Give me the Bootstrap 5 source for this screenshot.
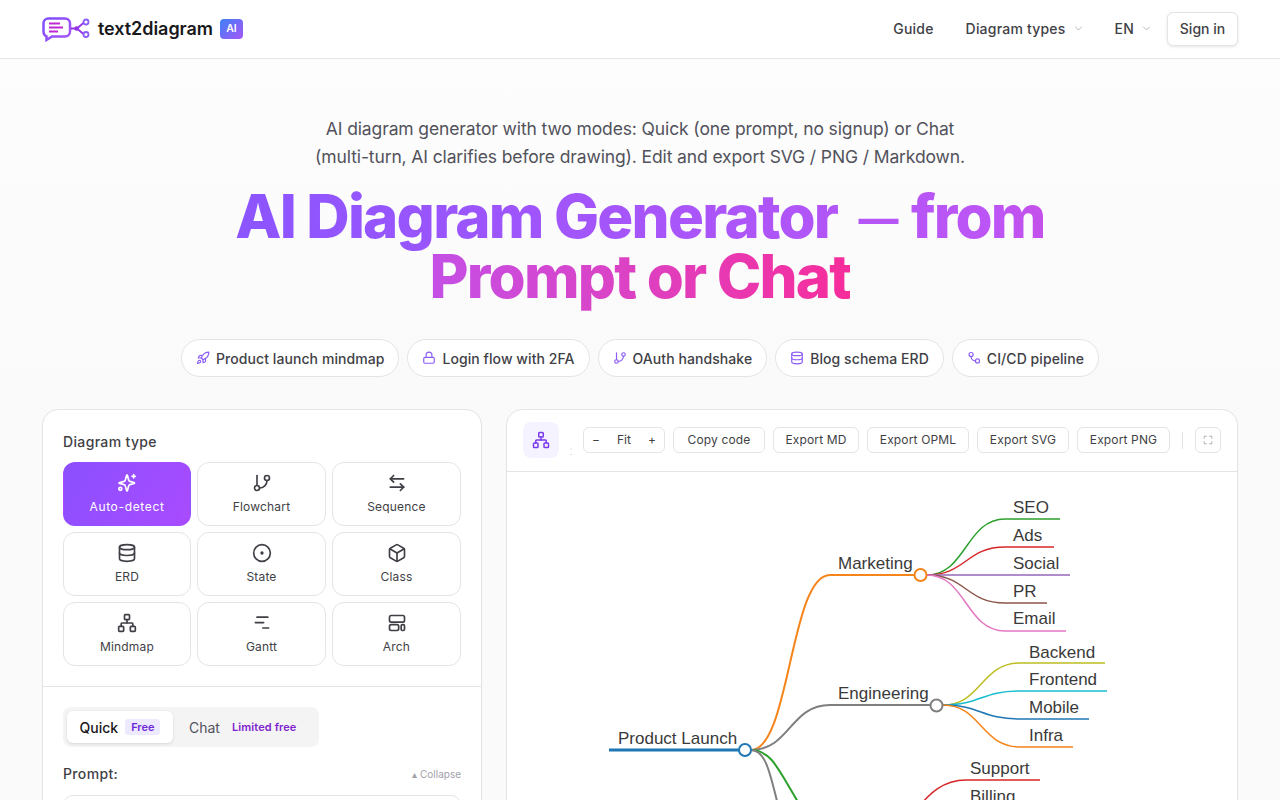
<!DOCTYPE html>
<html lang="en">
<head>
<meta charset="utf-8">
<title>text2diagram</title>
<link rel="stylesheet" href="https://cdn.jsdelivr.net/npm/bootstrap@5.3.0/dist/css/bootstrap.min.css">
<style>
body{font-family:Inter,"Liberation Sans",sans-serif;background:#fafafa;color:#27272a;font-size:14px}
svg{display:block;flex:none}
.ico{fill:none;stroke:currentColor;stroke-width:2;stroke-linecap:round;stroke-linejoin:round}
.topbar{height:59px;background:#fff;border-bottom:1px solid #e4e4e7;padding:0 42px}
.logo-name{font-size:18px;font-weight:600;color:#18181b;letter-spacing:-.003em;padding-bottom:2px}
.ai-tag{width:23px;height:20px;margin-left:7px;border-radius:4px;background:linear-gradient(135deg,#3b82f6,#a855f7);color:#fff;font-size:10.5px;font-weight:600}
.nav-item-link{color:#3f3f46;font-size:14px;font-weight:450;letter-spacing:.015em;text-decoration:none;padding-bottom:2px}
.nav-gap{margin-left:32px}
.chev{color:#a1a1aa}
.signin{height:34px;width:71px;padding:0 0 2px;margin-left:16px;font-size:14px;font-weight:450;color:#3f3f46;background:#fff;border:1px solid #e4e4e7;border-radius:6px;box-shadow:0 1px 3px rgba(0,0,0,.1)}
.hero{background:linear-gradient(#fdfdfe,#fafafa);padding:56px 42px 0}
.hero-sub{width:700px;font-size:17.5px;letter-spacing:-.12px;line-height:28px;color:#52525b;margin:0 auto 15px}
.hero-title{font-size:60px;line-height:60px;font-weight:800;letter-spacing:-.03em;margin:0 auto;width:900px}
.grad-one,.grad-two{display:block;width:fit-content;margin:0 auto;padding-bottom:14px;-webkit-background-clip:text;background-clip:text;color:transparent}
.grad-one{margin-bottom:-14px;background-image:linear-gradient(90deg,#8c55ff 0%,#bd55f5 94%,#c450ea 100%)}
.grad-two{margin-bottom:-14px;background-image:linear-gradient(90deg,#c44fe6 0%,#d944c8 41%,#f72d9b 100%)}
.dash{font-size:40px;line-height:0;vertical-align:5px;margin:0 3px 0 10px}
.chip-row{margin-top:33px;gap:8px}
.chip{height:38px;padding:0 14px;border:1px solid #e4e4e7;border-radius:19px;background:#fff;font-size:14px;font-weight:450;color:#3f3f46;gap:6px;letter-spacing:.005em}
.chip svg{color:#8b5cf6}
.studio{display:grid;grid-template-columns:440px 732px;gap:24px;padding:32px 42px 40px}
.panel{background:#fff;border:1px solid #e4e4e7;border-radius:16px;overflow:hidden;box-shadow:0 1px 2px rgba(0,0,0,.03)}
.panel-sec{padding:20px 20px 20px}
.field-label{font-size:14px;font-weight:450;color:#3f3f46;letter-spacing:.025em;line-height:24px;margin-bottom:8px}
.type-grid{display:grid;grid-template-columns:128px 129px 129px;gap:6px}
.type-cell{height:64px;border:1px solid #e4e4e7;border-radius:12px;background:#fff;color:#3f3f46;font-size:12px;letter-spacing:.015em;padding:10px 0 0;gap:5px}
.type-cell.on{background:linear-gradient(120deg,#8b50ff,#a94bff);border-color:transparent;color:#fff;letter-spacing:.055em}
.divider-top{border-top:1px solid #e4e4e7}
.seg{width:256px;height:40px;background:#f4f4f5;border-radius:8px;padding:4px}
.seg-on{width:106px;height:32px;background:#fff;border-radius:6px;box-shadow:0 1px 3px rgba(0,0,0,.12);font-size:14px;font-weight:450;color:#18181b;gap:7px}
.seg-off{padding-left:16px;font-size:14px;color:#52525b;gap:12px}
.tag-free{font-size:11px;font-weight:600;color:#6d28d9;background:#ede9fe;border-radius:3px;padding:1px 6px;line-height:14px}
.tag-lim{font-size:11px;font-weight:600;color:#7e22ce;letter-spacing:.01em}
.prompt-row{margin-top:15px}
.collapse-link{font-size:10px;color:#a1a1aa}
.prompt-box{width:100%;height:140px;margin-top:9px;border:1px solid #e4e4e7;border-radius:10px}
.tool-row{height:62px;padding:0 16px 1px;border-bottom:1px solid #e4e4e7}
.tool-main{flex:none;width:36px;height:36px;border-radius:8px;background:#f5f3ff;color:#7c3aed}
.tool-btn{height:26px;padding:0;font-size:12px;font-weight:400;letter-spacing:.012em;color:#3f3f46;background:#fff;border:1px solid #e4e4e7;border-radius:6px;white-space:nowrap}
.w-copy{width:92px}.w-md{width:86px}.w-opml{width:102px}.w-svg{width:92px}.w-png{width:93px}
.tool-zoom{width:82px;height:26px;border:1px solid #e4e4e7;border-radius:6px;font-size:12px;color:#3f3f46;padding:0 8px}
.tool-sep{width:1px;height:17px;background:#e4e4e7;margin:0 4px}
.tool-full{width:26px;height:26px;padding:0;color:#a1a1aa}
.canvas{font-family:"Liberation Sans",sans-serif;font-size:17px;fill:#3a3a3a}
.canvas path{fill:none}
.canvas circle{fill:#fff;stroke-width:2}
</style>
</head>
<body>
<header class="topbar d-flex align-items-center justify-content-between">
  <a class="d-flex align-items-center text-decoration-none" href="#">
    <svg width="48" height="26" viewBox="0 0 48 26">
      <defs><linearGradient id="lg" x1="0" y1="0" x2="1" y2="1"><stop offset="0" stop-color="#7c4dff"/><stop offset="1" stop-color="#a855f7"/></linearGradient></defs>
      <g transform="translate(0,1)">
      <path d="M6 1.500h17a5 5 0 0 1 5 5v8a5 5 0 0 1-5 5H10l-5.500 3.500v-3.700A5 5 0 0 1 1.500 14.500v-8a5 5 0 0 1 4.500-5z" fill="none" stroke="url(#lg)" stroke-width="2.500"/>
      <path d="M7 6.500h11M7 10.500h14M7 14.500h9" stroke="#c026d3" stroke-width="2" fill="none"/>
      <path d="M29 11.500h6M35 11.500l7-6M35 11.500l7 6" stroke="#9333ea" stroke-width="1.800" fill="none"/>
      <circle cx="34.500" cy="11.500" r="2.200" fill="#9333ea"/>
      <circle cx="44" cy="5" r="2.500" fill="#fff" stroke="#8b5cf6" stroke-width="1.800"/>
      <circle cx="44" cy="17.500" r="2.500" fill="#fff" stroke="#8b5cf6" stroke-width="1.800"/>
      </g>
    </svg>
    <span class="logo-name ms-2">text2diagram</span>
    <span class="ai-tag d-inline-flex align-items-center justify-content-center">AI</span>
  </a>
  <nav class="d-flex align-items-center">
    <a class="nav-item-link" href="#">Guide</a>
    <a class="nav-item-link nav-gap d-flex align-items-center" href="#">Diagram types<svg class="ico chev ms-2" width="9" height="9" viewBox="0 0 24 24"><path d="m4 8 8 8 8-8"/></svg></a>
    <a class="nav-item-link nav-gap d-flex align-items-center" href="#">EN<svg class="ico chev ms-2" width="9" height="9" viewBox="0 0 24 24"><path d="m4 8 8 8 8-8"/></svg></a>
    <button class="signin btn">Sign in</button>
  </nav>
</header>

<section class="hero text-center">
  <p class="hero-sub">AI diagram generator with two modes: Quick (one prompt, no signup) or Chat<br>(multi-turn, AI clarifies before drawing). Edit and export SVG / PNG / Markdown.</p>
  <h1 class="hero-title"><span class="grad-one">AI Diagram Generator <span class="dash">—</span> from</span><span class="grad-two">Prompt or Chat</span></h1>
  <div class="chip-row d-flex justify-content-center">
    <div class="chip d-flex align-items-center"><svg class="ico" width="14" height="14" viewBox="0 0 24 24"><path d="M4.500 16.500c-1.500 1.260-2 5-2 5s3.740-.5 5-2c.71-.84.7-2.130-.09-2.910a2.180 2.180 0 0 0-2.910-.09z"/><path d="m12 15-3-3a22 22 0 0 1 2-3.950A12.880 12.880 0 0 1 22 2c0 2.720-.78 7.500-6 11a22.350 22.350 0 0 1-4 2z"/><path d="M9 12H4s.55-3.030 2-4c1.620-1.080 5 0 5 0"/><path d="M12 15v5s3.030-.55 4-2c1.080-1.620 0-5 0-5"/></svg>Product launch mindmap</div>
    <div class="chip d-flex align-items-center"><svg class="ico" width="14" height="14" viewBox="0 0 24 24"><rect x="3" y="11" width="18" height="10" rx="2"/><path d="M7 11V7a5 5 0 0 1 10 0v4"/></svg>Login flow with 2FA</div>
    <div class="chip d-flex align-items-center"><svg class="ico" width="14" height="14" viewBox="0 0 24 24"><path d="M6 3v12"/><circle cx="18" cy="6" r="3"/><circle cx="6" cy="18" r="3"/><path d="M18 9a9 9 0 0 1-9 9"/></svg>OAuth handshake</div>
    <div class="chip d-flex align-items-center"><svg class="ico" width="14" height="14" viewBox="0 0 24 24"><ellipse cx="12" cy="5" rx="9" ry="3"/><path d="M3 5v14a9 3 0 0 0 18 0V5"/><path d="M3 12a9 3 0 0 0 18 0"/></svg>Blog schema ERD</div>
    <div class="chip d-flex align-items-center"><svg class="ico" width="14" height="14" viewBox="0 0 24 24"><circle cx="7" cy="6" r="3.500"/><circle cx="18" cy="17" r="3.500"/><path d="M7 9.500c0 4 3 7.500 7.500 7.500"/></svg>CI/CD pipeline</div>
  </div>
</section>

<main class="studio">
  <section class="panel">
    <div class="panel-sec">
      <div class="field-label">Diagram type</div>
      <div class="type-grid">
        <button class="type-cell on d-flex flex-column align-items-center"><svg class="ico" width="20" height="20" viewBox="0 0 24 24"><path d="M10 15.500A2 2 0 0 0 8.500 14l-5.500-1.500a.5.5 0 0 1 0-1L8.500 10A2 2 0 0 0 10 8.500l1.500-5.500a.5.5 0 0 1 1 0L14 8.500A2 2 0 0 0 15.500 10l5 1.500a.5.5 0 0 1 0 1L15.500 14a2 2 0 0 0-1.500 1.500l-1.500 5.500a.5.5 0 0 1-1 0z"/><path d="M20 2v4M22 4h-4"/><circle cx="4" cy="19" r="1.800"/></svg>Auto-detect</button>
        <button class="type-cell d-flex flex-column align-items-center"><svg class="ico" width="20" height="20" viewBox="0 0 24 24"><path d="M6 3v12"/><circle cx="18" cy="6" r="3"/><circle cx="6" cy="18" r="3"/><path d="M18 9a9 9 0 0 1-9 9"/></svg>Flowchart</button>
        <button class="type-cell d-flex flex-column align-items-center"><svg class="ico" width="20" height="20" viewBox="0 0 24 24"><path d="M8 3 4 7l4 4"/><path d="M4 7h16"/><path d="m16 21 4-4-4-4"/><path d="M20 17H4"/></svg>Sequence</button>
        <button class="type-cell d-flex flex-column align-items-center"><svg class="ico" width="20" height="20" viewBox="0 0 24 24"><ellipse cx="12" cy="5" rx="9" ry="3"/><path d="M3 5v14a9 3 0 0 0 18 0V5"/><path d="M3 12a9 3 0 0 0 18 0"/></svg>ERD</button>
        <button class="type-cell d-flex flex-column align-items-center"><svg class="ico" width="20" height="20" viewBox="0 0 24 24"><circle cx="12" cy="12" r="10"/><circle cx="12" cy="12" r="1" fill="currentColor"/></svg>State</button>
        <button class="type-cell d-flex flex-column align-items-center"><svg class="ico" width="20" height="20" viewBox="0 0 24 24"><path d="M21 8a2 2 0 0 0-1-1.730l-7-4a2 2 0 0 0-2 0l-7 4A2 2 0 0 0 3 8v8a2 2 0 0 0 1 1.730l7 4a2 2 0 0 0 2 0l7-4A2 2 0 0 0 21 16Z"/><path d="m3.300 7 8.700 5 8.700-5"/><path d="M12 22V12"/></svg>Class</button>
        <button class="type-cell d-flex flex-column align-items-center"><svg class="ico" width="20" height="20" viewBox="0 0 24 24"><rect x="16" y="16" width="6" height="6" rx="1"/><rect x="2" y="16" width="6" height="6" rx="1"/><rect x="9" y="2" width="6" height="6" rx="1"/><path d="M5 16v-3a1 1 0 0 1 1-1h12a1 1 0 0 1 1 1v3"/><path d="M12 12V8"/></svg>Mindmap</button>
        <button class="type-cell d-flex flex-column align-items-center"><svg class="ico" width="20" height="20" viewBox="0 0 24 24"><path d="M6 5h13M4 11.500h10M13 18h7"/></svg>Gantt</button>
        <button class="type-cell d-flex flex-column align-items-center"><svg class="ico" width="20" height="20" viewBox="0 0 24 24"><rect x="3" y="3" width="18" height="8" rx="2"/><rect x="3" y="14" width="11" height="7" rx="2"/><rect x="17" y="14" width="4" height="7" rx="1.500"/></svg>Arch</button>
      </div>
    </div>
    <div class="panel-sec divider-top">
      <div class="seg d-flex align-items-center">
        <div class="seg-on d-flex align-items-center justify-content-center">Quick <span class="tag-free">Free</span></div>
        <div class="seg-off d-flex align-items-center">Chat <span class="tag-lim">Limited free</span></div>
      </div>
      <div class="prompt-row d-flex align-items-center justify-content-between">
        <span class="field-label mb-0">Prompt:</span>
        <span class="collapse-link">▴ Collapse</span>
      </div>
      <div class="prompt-box"></div>
    </div>
  </section>

  <section class="panel">
    <div class="tool-row d-flex align-items-center">
      <div class="tool-main d-flex align-items-center justify-content-center"><svg class="ico" width="18" height="18" viewBox="0 0 24 24"><rect x="16" y="16" width="6" height="6" rx="1"/><rect x="2" y="16" width="6" height="6" rx="1"/><rect x="9" y="2" width="6" height="6" rx="1"/><path d="M5 16v-3a1 1 0 0 1 1-1h12a1 1 0 0 1 1 1v3"/><path d="M12 12V8"/></svg></div>
      <svg width="24" height="36" viewBox="0 0 24 36"><path d="M12 26.500v1M12 32v1" stroke="#c4c4c8" stroke-width="1"/></svg>
      <div class="d-flex align-items-center gap-2">
        <div class="tool-zoom d-flex align-items-center justify-content-between"><span>−</span><span>Fit</span><span>+</span></div>
        <button class="tool-btn w-copy btn">Copy code</button>
        <button class="tool-btn w-md btn">Export MD</button>
        <button class="tool-btn w-opml btn">Export OPML</button>
        <button class="tool-btn w-svg btn">Export SVG</button>
        <button class="tool-btn w-png btn">Export PNG</button>
        <div class="tool-sep"></div>
        <button class="tool-btn tool-full btn d-flex align-items-center justify-content-center"><svg class="ico" width="10" height="10" viewBox="0 0 24 24"><path d="M3 8V3h5M16 3h5v5M21 16v5h-5M8 21H3v-5"/></svg></button>
      </div>
    </div>
    <svg class="canvas" width="730" height="560" viewBox="507 472 730 560">
      <g>
        <path d="M751 750C790 750 790 575 830 575L920 575" stroke="#f5841a" stroke-width="2"/>
        <path d="M751 750C790 750 790 705 830 705L936 705" stroke="#7f7f7f" stroke-width="2"/>
        <path d="M751 750C778 750 782 785 822 838" stroke="#2ca02c" stroke-width="2"/>
        <path d="M751 750C770 750 772 790 785 830" stroke="#7f7f7f" stroke-width="2"/>
        <path d="M609 750H745" stroke="#1f77b4" stroke-width="3"/>
        <path d="M927 575C966 575 966 519 1005 519H1060" stroke="#2ca02c" stroke-width="1.500"/>
        <path d="M927 575C966 575 966 547 1005 547H1054" stroke="#d62728" stroke-width="1.500"/>
        <path d="M927 575H1070" stroke="#9467bd" stroke-width="1.500"/>
        <path d="M927 575C966 575 966 603 1005 603H1047" stroke="#8c564b" stroke-width="1.500"/>
        <path d="M927 575C966 575 966 631 1005 631H1066" stroke="#e377c2" stroke-width="1.500"/>
        <path d="M943 705C981 705 981 663 1020 663H1105" stroke="#bcbd22" stroke-width="1.500"/>
        <path d="M943 705C981 705 981 691 1020 691H1107" stroke="#17becf" stroke-width="1.500"/>
        <path d="M943 705C981 705 981 719 1020 719H1089" stroke="#1f77b4" stroke-width="1.500"/>
        <path d="M943 705C981 705 981 747 1020 747H1073" stroke="#f5841a" stroke-width="1.500"/>
        <path d="M865 838C915 838 918 780 966 780H1040" stroke="#d62728" stroke-width="1.500"/>
        <circle cx="745" cy="750" r="6" stroke="#1f77b4"/>
        <circle cx="920.500" cy="575" r="6" stroke="#f5841a"/>
        <circle cx="936.500" cy="705.500" r="6" stroke="#7f7f7f"/>
      </g>
      <text x="618" y="744">Product Launch</text>
      <text x="838" y="569">Marketing</text>
      <text x="838" y="699">Engineering</text>
      <text x="1013" y="513">SEO</text>
      <text x="1013" y="541">Ads</text>
      <text x="1013" y="569">Social</text>
      <text x="1013" y="597">PR</text>
      <text x="1013" y="624">Email</text>
      <text x="1029" y="658">Backend</text>
      <text x="1029" y="685">Frontend</text>
      <text x="1029" y="713">Mobile</text>
      <text x="1029" y="741">Infra</text>
      <text x="970" y="774">Support</text>
      <text x="970" y="802">Billing</text>
    </svg>
  </section>
</main>
<script src="https://cdn.jsdelivr.net/npm/bootstrap@5.3.0/dist/js/bootstrap.bundle.min.js"></script>
</body>
</html>
